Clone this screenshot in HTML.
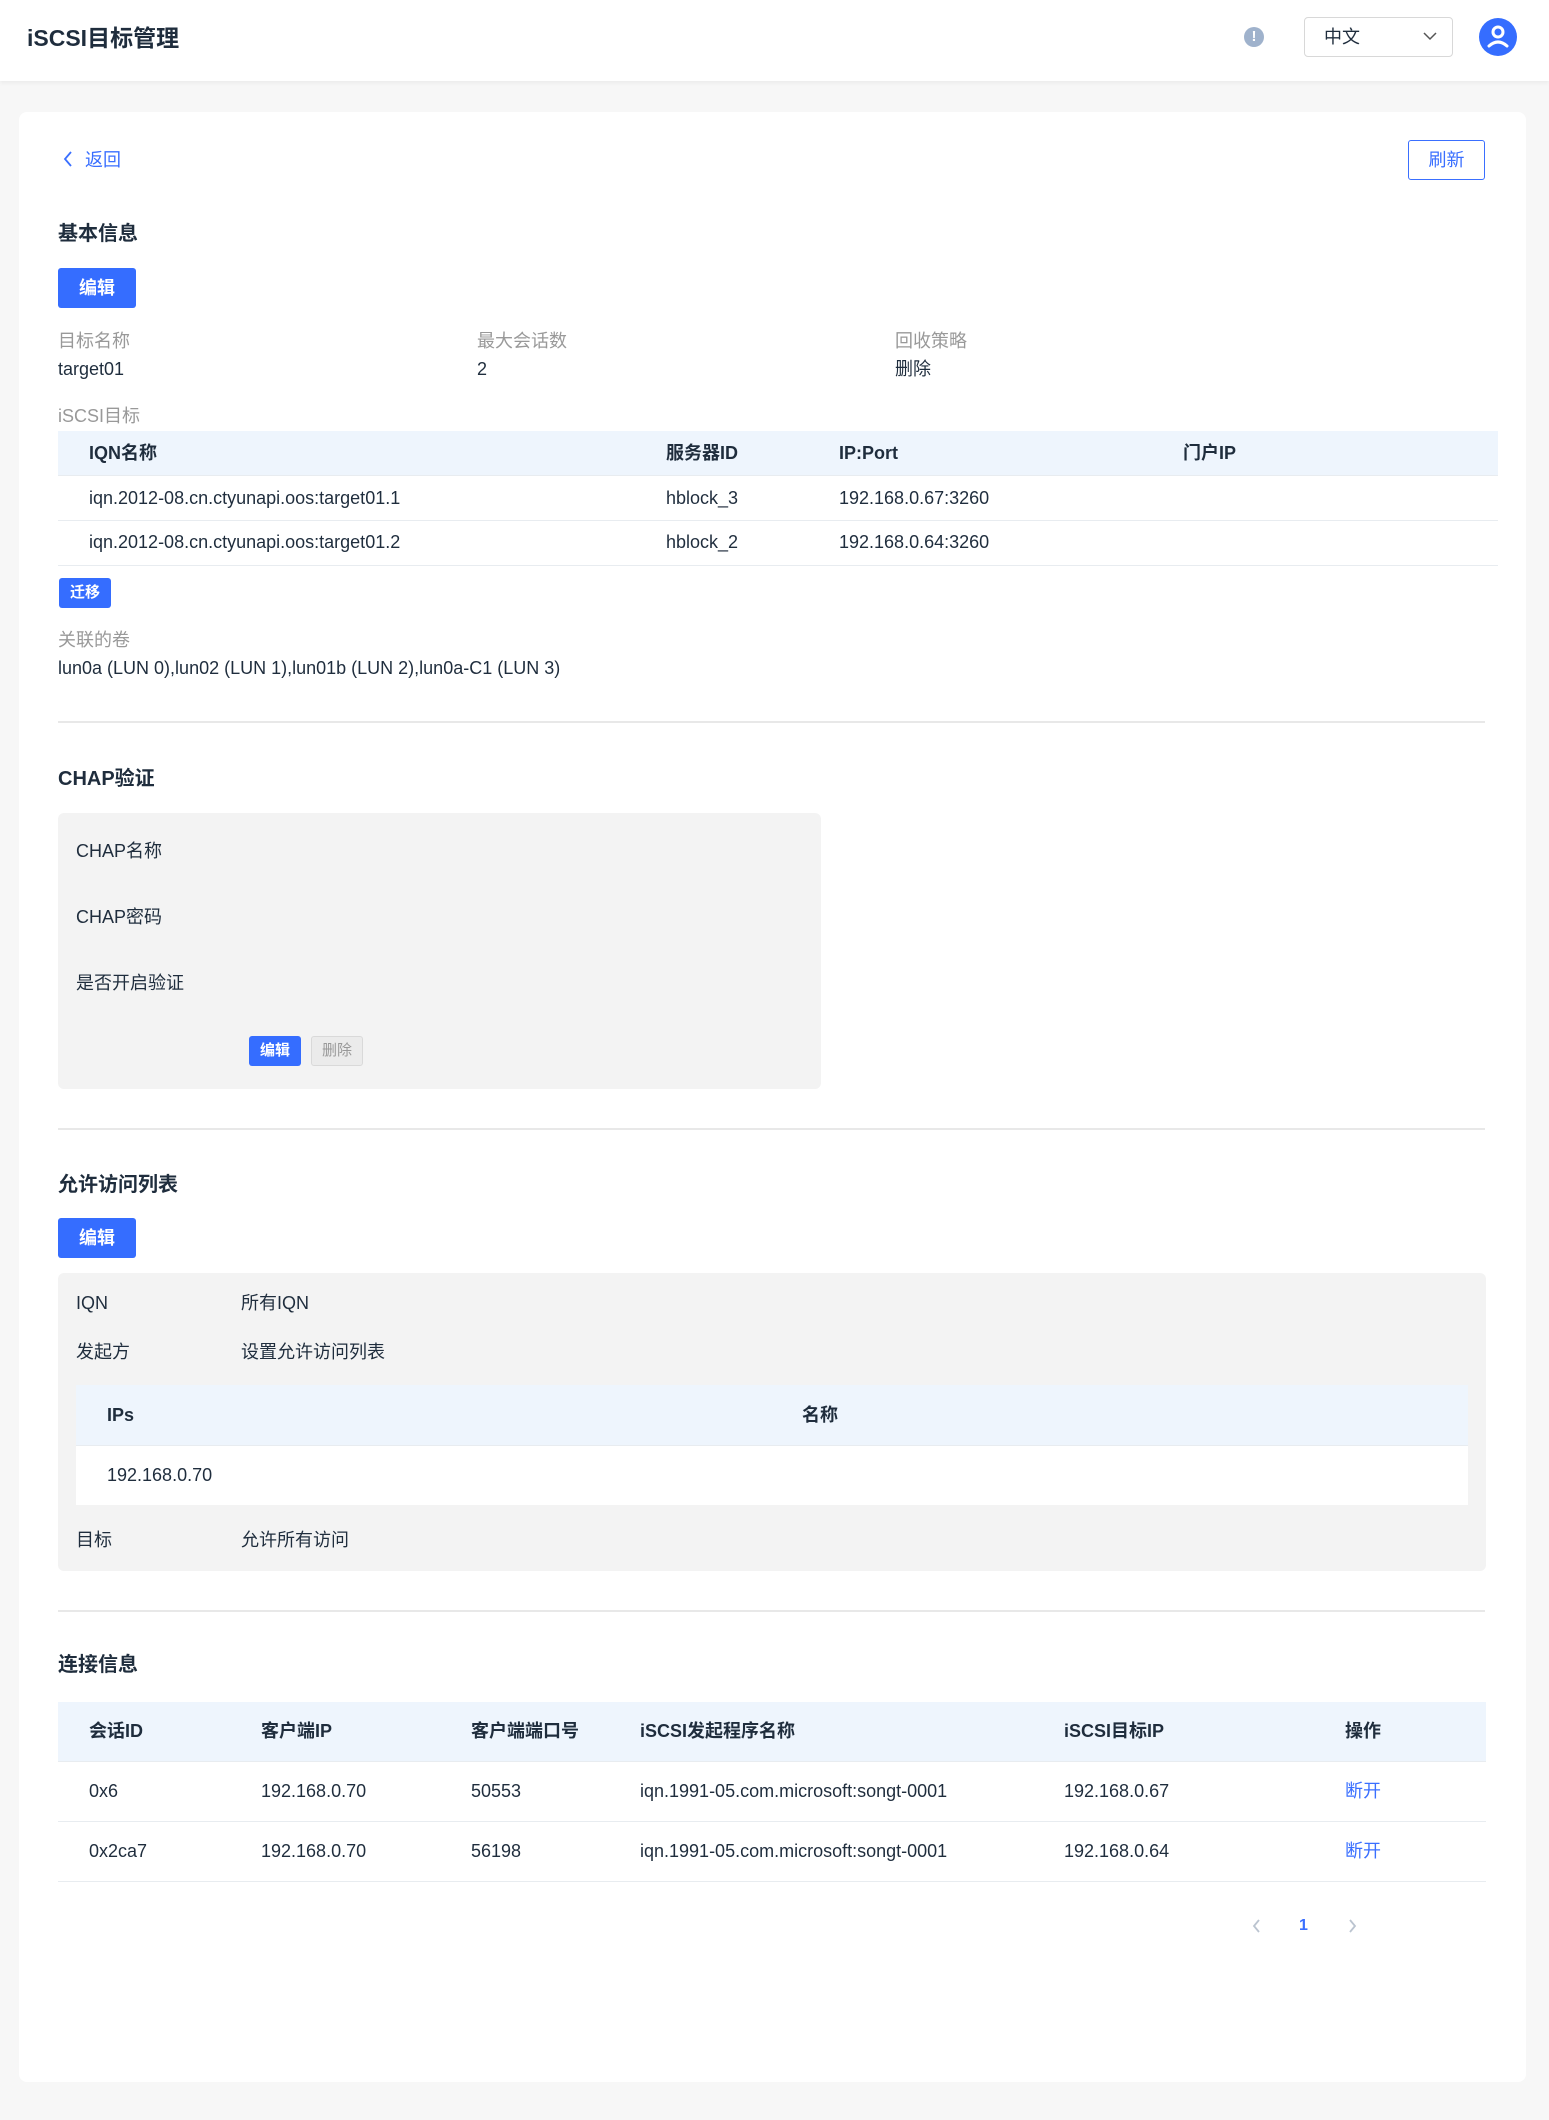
<!DOCTYPE html>
<html><head><meta charset="utf-8"><style>
*{margin:0;padding:0;box-sizing:border-box}
body{width:1549px;height:2120px;background:#f7f7f7;font-family:"Liberation Sans","Noto Sans CJK SC",sans-serif;color:#1f2d3d;position:relative;overflow:hidden;font-size:18px}
.a{position:absolute}
.t{position:absolute;line-height:24px;white-space:nowrap}
.h{font-weight:bold;font-size:20px}
.g{color:#999}
.th{font-weight:bold}
.btn{position:absolute;background:#356dff;color:#fff;border-radius:3px;text-align:center;font-weight:bold}
.line{position:absolute;height:2px;background:#e8e8e8}
.hl{position:absolute;height:1px;background:#e8ecf0}
.blue{color:#3a6fff}
</style></head><body>
<div class="a" style="left:0;top:0;width:1549px;height:81px;background:#fff;box-shadow:0 2px 4px rgba(0,0,0,0.05)"></div>
<div class="t" style="left:27px;top:24px;font-size:23px;font-weight:bold;line-height:28px">iSCSI目标管理</div>
<div class="a" style="left:1244px;top:27px;width:20px;height:20px;border-radius:50%;background:#9fb2cc;color:#fff;font-size:15px;font-weight:bold;text-align:center;line-height:20px">!</div>
<div class="a" style="left:1304px;top:17px;width:149px;height:40px;border:1px solid #d8d8d8;border-radius:4px;background:#fff"></div>
<div class="t" style="left:1324px;top:25px;font-size:18px">中文</div>
<svg class="a" style="left:1423px;top:31px" width="14" height="10"><path d="M1 2 L7 8 L13 2" stroke="#555" stroke-width="1.5" fill="none"/></svg>
<div class="a" style="left:1479px;top:18px;width:38px;height:38px;border-radius:50%;background:#356dff"></div>
<svg class="a" style="left:1479px;top:18px" width="38" height="38"><circle cx="19" cy="14" r="5" stroke="#fff" stroke-width="3" fill="none"/><path d="M10 28 Q19 20 28 28" stroke="#fff" stroke-width="3" fill="none" stroke-linecap="round"/></svg>

<div class="a" style="left:19px;top:112px;width:1507px;height:1970px;background:#fff;border-radius:8px"></div>

<svg class="a" style="left:63px;top:151px" width="10" height="16"><path d="M8 1 L2 8 L8 15" stroke="#3a6fff" stroke-width="1.8" fill="none"/></svg>
<div class="t blue" style="left:85px;top:148px">返回</div>
<div class="a blue" style="left:1408px;top:140px;width:77px;height:40px;border:1px solid #3a6fff;border-radius:3px;text-align:center;line-height:38px">刷新</div>

<div class="t h" style="left:58px;top:222px">基本信息</div>
<div class="btn" style="left:58px;top:268px;width:78px;height:40px;line-height:40px">编辑</div>
<div class="t g" style="left:58px;top:329px">目标名称</div>
<div class="t" style="left:58px;top:357px">target01</div>
<div class="t g" style="left:477px;top:329px">最大会话数</div>
<div class="t" style="left:477px;top:357px">2</div>
<div class="t g" style="left:895px;top:329px">回收策略</div>
<div class="t" style="left:895px;top:357px">删除</div>
<div class="t g" style="left:58px;top:404px">iSCSI目标</div>
<div class="a" style="left:58px;top:431px;width:1440px;height:45px;background:#eef5fd"></div>
<div class="hl" style="left:58px;top:475px;width:1440px"></div>
<div class="hl" style="left:58px;top:520px;width:1440px"></div>
<div class="hl" style="left:58px;top:565px;width:1440px"></div>
<div class="t th" style="left:89px;top:441px">IQN名称</div>
<div class="t th" style="left:666px;top:441px">服务器ID</div>
<div class="t th" style="left:839px;top:441px">IP:Port</div>
<div class="t th" style="left:1183px;top:441px">门户IP</div>
<div class="t" style="left:89px;top:486px">iqn.2012-08.cn.ctyunapi.oos:target01.1</div>
<div class="t" style="left:666px;top:486px">hblock_3</div>
<div class="t" style="left:839px;top:486px">192.168.0.67:3260</div>
<div class="t" style="left:89px;top:530px">iqn.2012-08.cn.ctyunapi.oos:target01.2</div>
<div class="t" style="left:666px;top:530px">hblock_2</div>
<div class="t" style="left:839px;top:530px">192.168.0.64:3260</div>
<div class="btn" style="left:59px;top:578px;width:52px;height:30px;line-height:30px;font-size:15px">迁移</div>
<div class="t g" style="left:58px;top:628px">关联的卷</div>
<div class="t" style="left:58px;top:656px">lun0a (LUN 0),lun02 (LUN 1),lun01b (LUN 2),lun0a-C1 (LUN 3)</div>
<div class="line" style="left:58px;top:721px;width:1427px"></div>

<div class="t h" style="left:58px;top:767px">CHAP验证</div>
<div class="a" style="left:58px;top:813px;width:763px;height:276px;background:#f3f3f3;border-radius:6px"></div>
<div class="t" style="left:76px;top:839px">CHAP名称</div>
<div class="t" style="left:76px;top:905px">CHAP密码</div>
<div class="t" style="left:76px;top:971px">是否开启验证</div>
<div class="btn" style="left:249px;top:1036px;width:52px;height:30px;line-height:30px;font-size:15px">编辑</div>
<div class="a" style="left:311px;top:1036px;width:52px;height:30px;line-height:28px;font-size:15px;text-align:center;color:#999;background:#ebebeb;border:1px solid #d9d9d9;border-radius:3px">删除</div>
<div class="line" style="left:58px;top:1128px;width:1427px"></div>

<div class="t h" style="left:58px;top:1173px">允许访问列表</div>
<div class="btn" style="left:58px;top:1218px;width:78px;height:40px;line-height:40px">编辑</div>
<div class="a" style="left:58px;top:1273px;width:1428px;height:298px;background:#f3f3f3;border-radius:6px"></div>
<div class="t" style="left:76px;top:1291px">IQN</div>
<div class="t" style="left:241px;top:1291px">所有IQN</div>
<div class="t" style="left:76px;top:1340px">发起方</div>
<div class="t" style="left:241px;top:1340px">设置允许访问列表</div>
<div class="a" style="left:76px;top:1385px;width:1392px;height:60px;background:#eef5fd"></div>
<div class="a" style="left:76px;top:1445px;width:1392px;height:60px;background:#fff;border-top:1px solid #e8ecf0"></div>
<div class="t th" style="left:107px;top:1403px">IPs</div>
<div class="t th" style="left:802px;top:1403px">名称</div>
<div class="t" style="left:107px;top:1463px">192.168.0.70</div>
<div class="t" style="left:76px;top:1528px">目标</div>
<div class="t" style="left:241px;top:1528px">允许所有访问</div>
<div class="line" style="left:58px;top:1610px;width:1427px"></div>

<div class="t h" style="left:58px;top:1653px">连接信息</div>
<div class="a" style="left:58px;top:1702px;width:1428px;height:59px;background:#eef5fd"></div>
<div class="hl" style="left:58px;top:1761px;width:1428px"></div>
<div class="hl" style="left:58px;top:1821px;width:1428px"></div>
<div class="hl" style="left:58px;top:1881px;width:1428px"></div>
<div class="t th" style="left:89px;top:1719px">会话ID</div>
<div class="t th" style="left:261px;top:1719px">客户端IP</div>
<div class="t th" style="left:471px;top:1719px">客户端端口号</div>
<div class="t th" style="left:640px;top:1719px">iSCSI发起程序名称</div>
<div class="t th" style="left:1064px;top:1719px">iSCSI目标IP</div>
<div class="t th" style="left:1345px;top:1719px">操作</div>
<div class="t" style="left:89px;top:1779px">0x6</div>
<div class="t" style="left:261px;top:1779px">192.168.0.70</div>
<div class="t" style="left:471px;top:1779px">50553</div>
<div class="t" style="left:640px;top:1779px">iqn.1991-05.com.microsoft:songt-0001</div>
<div class="t" style="left:1064px;top:1779px">192.168.0.67</div>
<div class="t blue" style="left:1345px;top:1779px">断开</div>
<div class="t" style="left:89px;top:1839px">0x2ca7</div>
<div class="t" style="left:261px;top:1839px">192.168.0.70</div>
<div class="t" style="left:471px;top:1839px">56198</div>
<div class="t" style="left:640px;top:1839px">iqn.1991-05.com.microsoft:songt-0001</div>
<div class="t" style="left:1064px;top:1839px">192.168.0.64</div>
<div class="t blue" style="left:1345px;top:1839px">断开</div>

<svg class="a" style="left:1251px;top:1919px" width="10" height="14"><path d="M8 1 L3 7 L8 13" stroke="#bbc4d0" stroke-width="1.8" fill="none"/></svg>
<div class="t blue" style="left:1299px;top:1914px;font-weight:bold;font-size:16px">1</div>
<svg class="a" style="left:1348px;top:1919px" width="10" height="14"><path d="M2 1 L7 7 L2 13" stroke="#bbc4d0" stroke-width="1.8" fill="none"/></svg>
</body></html>
